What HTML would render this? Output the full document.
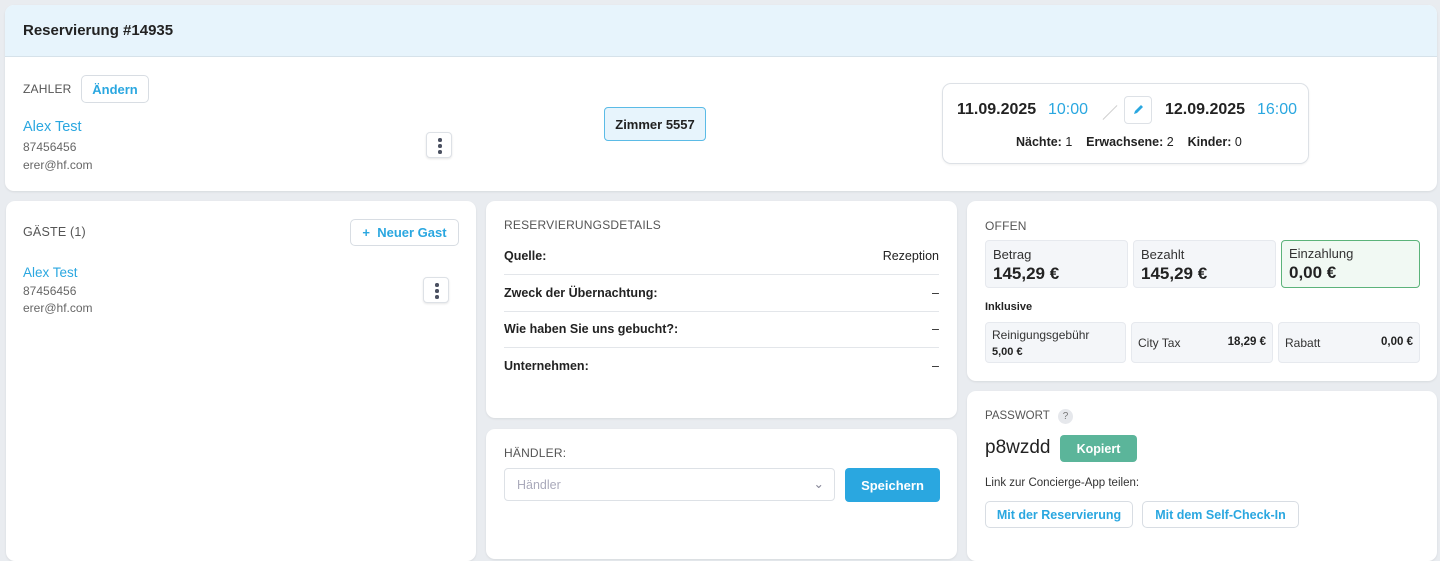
<!DOCTYPE html>
<html><head><meta charset="utf-8"><style>
*{box-sizing:border-box;margin:0;padding:0}
body{width:1440px;height:543px;overflow:hidden;background:#e9ecf0;font-family:"Liberation Sans",sans-serif;color:#222;position:relative;font-size:13px}
.card{position:absolute;background:#fff;border-radius:9px;box-shadow:0 1px 2px rgba(0,0,0,.08)}
.a{position:absolute}
.lbl{color:#555;font-size:12px;letter-spacing:.2px}
.btn{position:absolute;border:1px solid #d8dde3;border-radius:5px;background:#fff;color:#2aa7e0;font-weight:bold;font-size:13px;display:flex;align-items:center;justify-content:center}
.blue{color:#2aa7e0}
.gray{color:#666}
.dots{position:absolute;width:26px;height:26px;border:1px solid #dde1e6;border-radius:4px;box-shadow:0 1px 2px rgba(0,0,0,.1);background:#fff}
.dots i{position:absolute;left:11px;width:3.5px;height:3.5px;border-radius:50%;background:#4a5060}
.row{position:absolute;left:18px;right:18px;height:37px;border-bottom:1px solid #e3e6ea;display:flex;justify-content:space-between;align-items:center;font-size:12.5px}
.row b{font-weight:bold}
.box{position:absolute;background:#f4f6f9;border:1px solid #e6e9ee;border-radius:4px}
</style></head><body>

<div class="card" style="left:5px;top:5px;width:1432px;height:186px;overflow:hidden">
 <div class="a" style="left:0;top:0;width:100%;height:52px;background:#e7f4fc;border-bottom:1px solid #d6e2ea"></div>
 <div class="a" style="left:18px;top:17px;font-size:15px;font-weight:600;color:#222">Reservierung #14935</div>
 <div class="a lbl" style="left:18px;top:77px">ZAHLER</div>
 <div class="btn" style="left:76px;top:70px;width:68px;height:28px">Ändern</div>
 <div class="a blue" style="left:18px;top:114px;font-size:14.5px">Alex Test</div>
 <div class="a gray" style="left:18px;top:135px;font-size:12px">87456456</div>
 <div class="a gray" style="left:18px;top:153px;font-size:12px">erer@hf.com</div>
 <div class="dots" style="left:421px;top:127px"><i style="top:5px"></i><i style="top:11px"></i><i style="top:17px"></i></div>
 <div class="a" style="left:599px;top:102px;width:102px;height:34px;border:1px solid #5bbbe6;background:#e7f4fc;border-radius:4px;font-weight:bold;font-size:13px;display:flex;align-items:center;justify-content:center">Zimmer 5557</div>
 <div class="a" style="left:937px;top:78px;width:367px;height:81px;border:1px solid #dde1e6;border-radius:9px;box-shadow:0 1px 2px rgba(0,0,0,.06)">
  <div class="a" style="left:14px;top:17px;font-size:16px;font-weight:bold;color:#222">11.09.2025</div>
  <div class="a blue" style="left:105px;top:17px;font-size:16px">10:00</div>
  <div class="a" style="left:157px;top:28px;width:20px;height:1px;background:#ccc;transform:rotate(-45deg)"></div>
  <div class="a" style="left:181px;top:12px;width:28px;height:28px;border:1px solid #dde1e6;border-radius:4px">
   <svg width="26" height="26" viewBox="0 0 26 26" style="position:absolute;left:0;top:0"><path d="M9 17l1-3 6-6 2 2-6 6z" fill="#2aa7e0"/></svg></div>
  <div class="a" style="left:222px;top:17px;font-size:16px;font-weight:bold;color:#222">12.09.2025</div>
  <div class="a blue" style="left:314px;top:17px;font-size:16px">16:00</div>
  <div class="a" style="left:73px;top:51px;font-size:12.5px"><b>Nächte:</b> 1 &nbsp;&nbsp; <b>Erwachsene:</b> 2 &nbsp;&nbsp; <b>Kinder:</b> 0</div>
 </div>
</div>

<div class="card" style="left:6px;top:201px;width:470px;height:360px">
 <div class="a lbl" style="left:17px;top:24px;font-size:12.5px">GÄSTE (1)</div>
 <div class="btn" style="left:344px;top:18px;width:109px;height:27px">+&nbsp; Neuer Gast</div>
 <div class="a blue" style="left:17px;top:64px;font-size:13.5px">Alex Test</div>
 <div class="a gray" style="left:17px;top:83px;font-size:12px">87456456</div>
 <div class="a gray" style="left:17px;top:100px;font-size:12px">erer@hf.com</div>
 <div class="dots" style="left:417px;top:76px"><i style="top:5px"></i><i style="top:11px"></i><i style="top:17px"></i></div>
</div>

<div class="card" style="left:486px;top:201px;width:471px;height:217px">
 <div class="a lbl" style="left:18px;top:17px">RESERVIERUNGSDETAILS</div>
 <div class="row" style="top:37px"><b>Quelle:</b><span>Rezeption</span></div>
 <div class="row" style="top:74px"><b>Zweck der Übernachtung:</b><span>–</span></div>
 <div class="row" style="top:110px"><b>Wie haben Sie uns gebucht?:</b><span>–</span></div>
 <div class="row" style="top:146px;border:none"><b>Unternehmen:</b><span>–</span></div>
</div>

<div class="card" style="left:486px;top:429px;width:471px;height:130px">
 <div class="a lbl" style="left:18px;top:17px">HÄNDLER:</div>
 <div class="a" style="left:18px;top:39px;width:331px;height:33px;border:1px solid #dde1e6;border-radius:4px;color:#aab;font-size:12.5px;padding:9px 12px">Händler<span style="position:absolute;right:10px;top:7px;color:#889">⌄</span></div>
 <div class="a" style="left:359px;top:39px;width:95px;height:34px;background:#2aa7e0;border-radius:4px;color:#fff;font-weight:bold;display:flex;align-items:center;justify-content:center">Speichern</div>
</div>

<div class="card" style="left:967px;top:201px;width:470px;height:180px">
 <div class="a lbl" style="left:18px;top:18px">OFFEN</div>
 <div class="box" style="left:18px;top:39px;width:143px;height:48px"><div class="a" style="left:7px;top:6px;font-size:13px;color:#333">Betrag</div><div class="a" style="left:7px;top:23px;font-size:17px;font-weight:bold">145,29 €</div></div>
 <div class="box" style="left:166px;top:39px;width:143px;height:48px"><div class="a" style="left:7px;top:6px;font-size:13px;color:#333">Bezahlt</div><div class="a" style="left:7px;top:23px;font-size:17px;font-weight:bold">145,29 €</div></div>
 <div class="box" style="left:314px;top:39px;width:139px;height:48px;background:#f1f9f3;border:1px solid #5cb37a"><div class="a" style="left:7px;top:5px;font-size:13px;color:#333">Einzahlung</div><div class="a" style="left:7px;top:22px;font-size:17px;font-weight:bold">0,00 €</div></div>
 <div class="a" style="left:18px;top:100px;font-size:11px;font-weight:bold">Inklusive</div>
 <div class="box" style="left:18px;top:121px;width:141px;height:41px"><div class="a" style="left:6px;top:5px;font-size:12px;color:#333">Reinigungsgebühr</div><div class="a" style="left:6px;top:23px;font-size:11px;font-weight:bold">5,00 €</div></div>
 <div class="box" style="left:164px;top:121px;width:142px;height:41px"><div class="a" style="left:6px;top:13px;font-size:12px;color:#333">City Tax</div><div class="a" style="right:6px;top:13px;font-size:11.5px;font-weight:bold">18,29 €</div></div>
 <div class="box" style="left:311px;top:121px;width:142px;height:41px"><div class="a" style="left:6px;top:13px;font-size:12px;color:#333">Rabatt</div><div class="a" style="right:6px;top:13px;font-size:11.5px;font-weight:bold">0,00 €</div></div>
</div>

<div class="card" style="left:967px;top:391px;width:470px;height:170px">
 <div class="a lbl" style="left:18px;top:19px;font-size:11.5px;letter-spacing:0">PASSWORT</div>
 <div class="a" style="left:91px;top:18px;width:15px;height:15px;border-radius:50%;background:#e6e8ec;color:#777;font-size:10px;text-align:center;line-height:15px">?</div>
 <div class="a" style="left:18px;top:46px;font-size:19px;color:#222">p8wzdd</div>
 <div class="a" style="left:93px;top:44px;width:77px;height:27px;background:#5bb59a;border-radius:4px;color:#fff;font-weight:bold;font-size:12.5px;display:flex;align-items:center;justify-content:center">Kopiert</div>
 <div class="a" style="left:18px;top:86px;font-size:11.5px;color:#333">Link zur Concierge-App teilen:</div>
 <div class="btn" style="left:18px;top:110px;width:148px;height:27px;font-size:12.5px">Mit der Reservierung</div>
 <div class="btn" style="left:175px;top:110px;width:157px;height:27px;font-size:12.5px">Mit dem Self-Check-In</div>
</div>
</body></html>
